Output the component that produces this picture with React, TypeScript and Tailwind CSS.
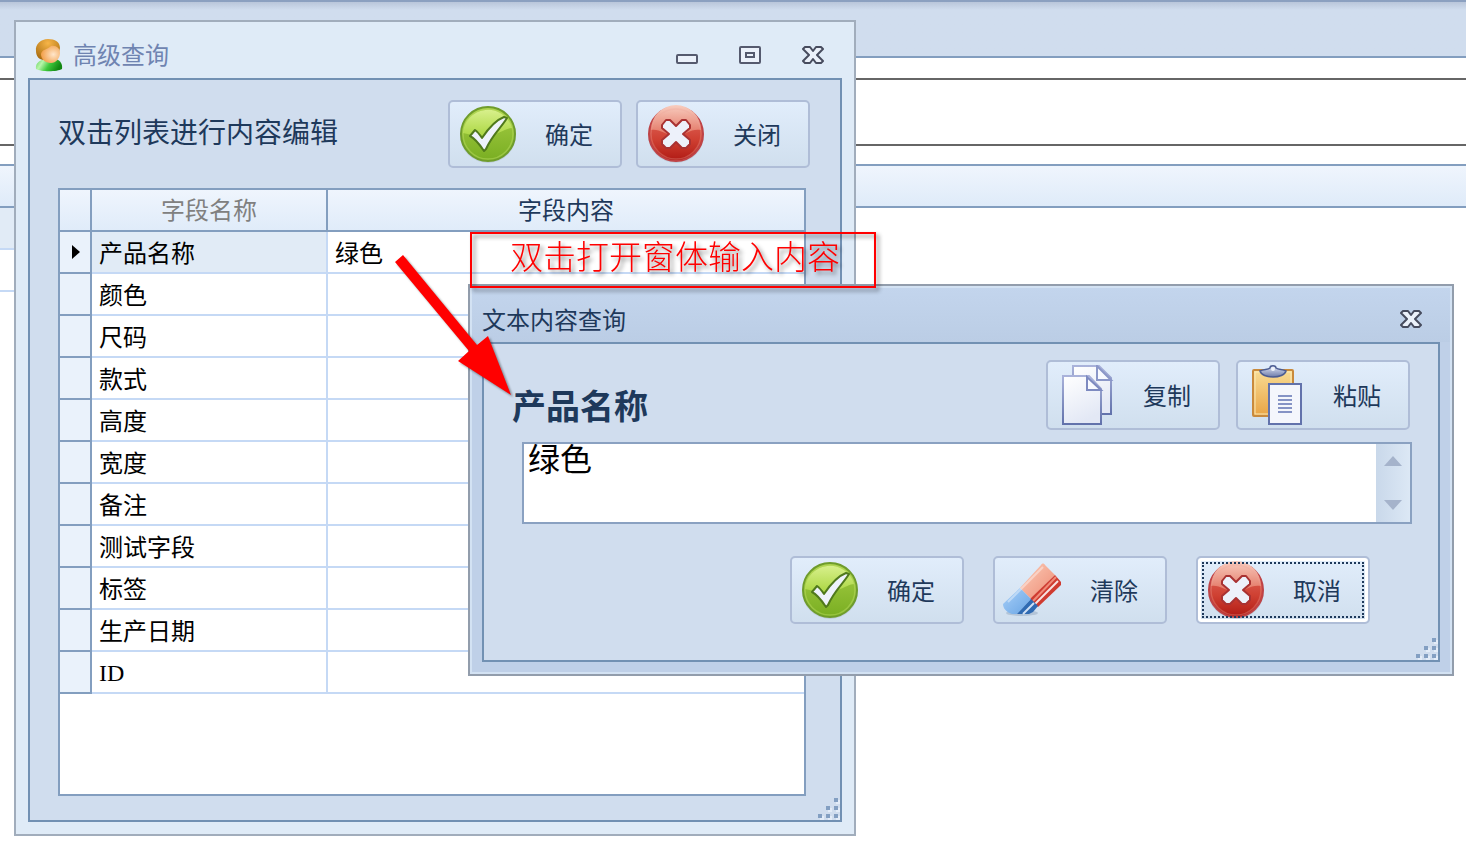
import React, { useState, type ReactNode } from "react";

/** Grid rows */
type Field = { name: string; value: string };

const initialFields: Field[] = [
  { name: "产品名称", value: "绿色" },
  { name: "颜色", value: "" },
  { name: "尺码", value: "" },
  { name: "款式", value: "" },
  { name: "高度", value: "" },
  { name: "宽度", value: "" },
  { name: "备注", value: "" },
  { name: "测试字段", value: "" },
  { name: "标签", value: "" },
  { name: "生产日期", value: "" },
  { name: "ID", value: "" },
];

function UserIcon() {
  return (
    <svg width="28" height="34" viewBox="0 0 28 34" aria-hidden="true">
      <defs>
        <radialGradient id="hair" cx="0.5" cy="0.2" r="0.8">
          <stop offset="0" stopColor="#f7b548" />
          <stop offset="1" stopColor="#a86c10" />
        </radialGradient>
        <radialGradient id="face" cx="0.65" cy="0.5" r="0.6">
          <stop offset="0" stopColor="#ffe6cb" />
          <stop offset="1" stopColor="#f3a350" />
        </radialGradient>
        <linearGradient id="shirt" x1="0" y1="0" x2="1" y2="0.3">
          <stop offset="0" stopColor="#5ccf56" />
          <stop offset="0.3" stopColor="#b8f5ab" />
          <stop offset="0.6" stopColor="#3fc93d" />
          <stop offset="1" stopColor="#128712" />
        </linearGradient>
      </defs>
      <path d="M1 31C0 25 5 22 10 21H19C24 21 28 25 27 31C22 34 6 34 1 31Z" fill="url(#shirt)" />
      <path d="M1 13C0 6 6 1 13 1C20 1 25 4 25 10L24 14L9 22C4 22 1 18 1 13Z" fill="url(#hair)" />
      <path d="M6 16C7 11 12 12 16 8C21 7 25 10 25 15C25 20 21 25 16 25C10 25 6 21 6 16Z" fill="url(#face)" />
    </svg>
  );
}

function CheckIcon() {
  return (
    <svg width="60" height="60" viewBox="0 0 60 60" aria-hidden="true">
      <defs>
        <linearGradient id="green" x1="0" y1="0" x2="0" y2="1">
          <stop offset="0" stopColor="#a6cd45" />
          <stop offset="1" stopColor="#79ae22" />
        </linearGradient>
        <linearGradient id="greenShine" x1="0" y1="0" x2="0" y2="1">
          <stop offset="0" stopColor="#d8f08c" />
          <stop offset="1" stopColor="#acd744" />
        </linearGradient>
      </defs>
      <circle cx="30" cy="31" r="28" fill="#a9b9c9" opacity="0.5" />
      <circle cx="30" cy="30" r="27" fill="url(#green)" stroke="#6f9c2c" strokeWidth="2" />
      <path d="M5 29A25 25 0 0 1 54 24C43 25 38 37 5 29Z" fill="url(#greenShine)" />
      <circle cx="30" cy="30" r="25" fill="none" stroke="#c4e36c" strokeWidth="1.500" opacity="0.4" />
      <path
        d="M12 32L17 26C20 28 22 31 24 34C30 25 38 16 46 13L49 14C43 24 34 31 28 45L26 47C22 41 18 35 12 32Z"
        fill="#eef2fb"
        stroke="#50791c"
        strokeWidth="2"
        strokeLinejoin="round"
      />
    </svg>
  );
}

function CrossIcon() {
  return (
    <svg width="60" height="60" viewBox="0 0 60 60" aria-hidden="true">
      <defs>
        <linearGradient id="red" x1="0" y1="0" x2="0" y2="1">
          <stop offset="0" stopColor="#e37368" />
          <stop offset="0.6" stopColor="#cf4032" />
          <stop offset="1" stopColor="#b01a14" />
        </linearGradient>
        <linearGradient id="redShine" x1="0" y1="0" x2="0" y2="1">
          <stop offset="0" stopColor="#f8cdbf" />
          <stop offset="1" stopColor="#e2715f" />
        </linearGradient>
      </defs>
      <circle cx="30" cy="31" r="28" fill="#a9b9c9" opacity="0.5" />
      <circle cx="30" cy="30" r="27" fill="url(#red)" stroke="#bf4346" strokeWidth="2" />
      <path d="M5 26A25 25 0 0 1 55 26C45 24 40 31 30 32C20 31 12 24 5 26Z" fill="url(#redShine)" />
      <circle cx="30" cy="30" r="25" fill="none" stroke="#f0a79b" strokeWidth="1.500" opacity="0.3" />
      <path
        d="M16 21L20 16H24L30 22L36 16H40L44 21V24L37 30L44 36V40L40 44H36L30 38L24 44H20L16 40V36L23 30L16 24Z"
        fill="#edf1fa"
        stroke="#a93232"
        strokeWidth="2"
        strokeLinejoin="round"
      />
    </svg>
  );
}

function CopyIcon() {
  return (
    <svg width="60" height="60" viewBox="0 0 60 60" aria-hidden="true">
      <defs>
        <linearGradient id="page" x1="0" y1="0" x2="0.4" y2="1">
          <stop offset="0" stopColor="#ffffff" />
          <stop offset="1" stopColor="#e3e8f5" />
        </linearGradient>
        <linearGradient id="pageEdge" x1="0" y1="0" x2="0" y2="1">
          <stop offset="0" stopColor="#a9b2da" />
          <stop offset="1" stopColor="#6272ab" />
        </linearGradient>
      </defs>
      <path d="M17 1H43L55 13V49H17Z" fill="url(#page)" stroke="url(#pageEdge)" strokeWidth="2" />
      <path d="M41 1V15H55Z" fill="#f8faff" stroke="#8b97c8" strokeWidth="2" />
      <path d="M7 11H33L45 24V59H7Z" fill="url(#page)" stroke="url(#pageEdge)" strokeWidth="2" />
      <path d="M31 12V25H45Z" fill="#f8faff" stroke="#7d8ac0" strokeWidth="2" />
    </svg>
  );
}

function PasteIcon() {
  return (
    <svg width="60" height="60" viewBox="0 0 60 60" aria-hidden="true">
      <defs>
        <linearGradient id="board" x1="0" y1="0" x2="0" y2="1">
          <stop offset="0" stopColor="#f8dc94" />
          <stop offset="1" stopColor="#e9a445" />
        </linearGradient>
        <linearGradient id="clip" x1="0" y1="0" x2="0" y2="1">
          <stop offset="0" stopColor="#e2e8f7" />
          <stop offset="1" stopColor="#6d7ba9" />
        </linearGradient>
      </defs>
      <rect x="7" y="5" width="40" height="46" rx="1" fill="url(#board)" stroke="#c98a3c" strokeWidth="2" />
      <rect x="9" y="7" width="36" height="42" fill="none" stroke="#fbe9b5" strokeWidth="1" />
      <path d="M14 6C18 4 22 5 24 3C24 0 30 0 30 3C33 5 36 4 40 6C38 14 16 14 14 6Z" fill="url(#clip)" stroke="#4c5d93" strokeWidth="1.500" />
      <circle cx="27" cy="4" r="2" fill="#eef2fb" />
      <rect x="23" y="19" width="32" height="40" fill="#f4f6fc" stroke="#6272ab" strokeWidth="2" />
      <path d="M32 31H46M32 35H46M32 39H46M32 43H46M32 47H46" stroke="#8593c5" strokeWidth="2" />
    </svg>
  );
}

function EraserIcon() {
  return (
    <svg width="60" height="60" viewBox="0 0 60 60" aria-hidden="true">
      <defs>
        <linearGradient id="pink" x1="0" y1="0" x2="1" y2="1">
          <stop offset="0" stopColor="#fbcdb9" />
          <stop offset="1" stopColor="#ee8c75" />
        </linearGradient>
        <linearGradient id="blue" x1="0" y1="0" x2="1" y2="1">
          <stop offset="0" stopColor="#a9d0f8" />
          <stop offset="1" stopColor="#68a4e4" />
        </linearGradient>
      </defs>
      <ellipse cx="19" cy="53" rx="16" ry="3" fill="#9fb0c6" opacity="0.6" />
      <path d="M38 5C39 3 41 3 42 5L52 15L28 39L17 28Z" fill="url(#pink)" />
      <path d="M52 15L58 22V25L35 47L27 39Z" fill="#cf3b30" />
      <path d="M53 17L30 41" stroke="#f08b78" strokeWidth="2" />
      <path d="M55 21L32 44" stroke="#f7e3e2" strokeWidth="2" />
      <path d="M17 28L28 39L14 54H9C3 52 0 48 0 44Z" fill="url(#blue)" />
      <path d="M28 39L35 46L30 52L26 54H14Z" fill="#2f6ab2" />
      <path d="M31 43L20 54" stroke="#cfe0f5" strokeWidth="2" />
      <path d="M40 7L5 42" stroke="#ffffff" strokeWidth="2" opacity="0.4" />
    </svg>
  );
}

function CloseGlyph() {
  return (
    <svg width="22" height="18" viewBox="0 0 22 18" aria-hidden="true">
      <path
        d="M3 1H8L11 5L14 1H19L21 3L15 9L21 15L19 17H14L11 13L8 17H3L1 15L7 9L1 3Z"
        fill="#ebf1fa"
        stroke="#474c5e"
        strokeWidth="2"
        strokeLinejoin="round"
      />
    </svg>
  );
}

function MinimizeGlyph() {
  return (
    <svg width="22" height="18" viewBox="0 0 22 18" aria-hidden="true">
      <rect x="1" y="9" width="20" height="8" rx="1" fill="#ebf1fa" stroke="#555a6e" strokeWidth="2" />
    </svg>
  );
}

function RestoreGlyph() {
  return (
    <svg width="22" height="18" viewBox="0 0 22 18" aria-hidden="true">
      <rect x="1" y="1" width="20" height="16" rx="1" fill="#ebf1fa" stroke="#555a6e" strokeWidth="2" />
      <rect x="7" y="7" width="8" height="4" fill="#ebf1fa" stroke="#555a6e" strokeWidth="2" />
    </svg>
  );
}

/** Dotted corner used to resize a window */
function ResizeGrip() {
  const dots = [
    [16, 0],
    [8, 8],
    [16, 8],
    [0, 16],
    [8, 16],
    [16, 16],
  ];
  return (
    <svg className="absolute right-0 bottom-0" width="22" height="22" viewBox="0 0 22 22" aria-hidden="true">
      {dots.map(([x, y]) => (
        <g key={`${x}-${y}`}>
          <rect x={x + 2} y={y + 2} width="4" height="4" fill="#e3ecf8" />
          <rect x={x} y={y} width="4" height="4" fill="#839fc2" />
        </g>
      ))}
    </svg>
  );
}

type ToolButtonProps = {
  icon: ReactNode;
  label: string;
  focused?: boolean;
  tall?: boolean;
  onClick?: () => void;
};

function ToolButton({ icon, label, focused, tall, onClick }: ToolButtonProps) {
  return (
    <button
      type="button"
      onClick={onClick}
      className={`flex w-[174px] items-center justify-between rounded-[5px] border-2 border-[#afbdd7] bg-linear-to-b from-[#e1edfb] to-[#d0dfee] pr-[27px] pl-2 text-2xl ${
        tall ? "h-[70px]" : "h-[68px]"
      } ${
        focused
          ? "shadow-[inset_0_0_0_3px_#ffffff] outline-2 outline-offset-[-8px] outline-[#1e395b] outline-dotted"
          : ""
      }`}
    >
      {icon}
      <span className="pt-1">{label}</span>
    </button>
  );
}

type QueryWindowProps = { fields: Field[] };

function QueryWindow({ fields }: QueryWindowProps) {
  return (
    <section className="absolute top-5 left-3.5 w-[842px] border-2 border-[#a1adbc] bg-[#dfebf7] px-3 pb-3">
      <header className="flex h-14 items-center gap-2.5 pt-2.5 pr-[18px] pl-[7px]">
        <UserIcon />
        <h1 className="flex-1 pt-0.5 text-2xl text-[#6f84b1]">高级查询</h1>
        <div className="flex gap-[41px]">
          <button type="button" aria-label="最小化">
            <MinimizeGlyph />
          </button>
          <button type="button" aria-label="还原">
            <RestoreGlyph />
          </button>
          <button type="button" aria-label="关闭窗口">
            <CloseGlyph />
          </button>
        </div>
      </header>

      <div className="relative border-2 border-[#7291b3] bg-[#d0ddee] pt-5 pb-6 pl-7">
        <div className="flex items-center gap-3.5 pr-[30px]">
          <p className="flex-1 text-[28px]">双击列表进行内容编辑</p>
          <ToolButton icon={<CheckIcon />} label="确定" />
          <ToolButton icon={<CrossIcon />} label="关闭" />
        </div>

        <div className="mt-5 mr-[34px] border-2 border-[#839ebf] bg-white pb-[100px]">
          <table className="w-full table-fixed border-separate border-spacing-0 text-2xl leading-9">
            <colgroup>
              <col className="w-8" />
              <col className="w-[236px]" />
              <col />
            </colgroup>
            <thead>
              <tr className="h-[42px] bg-linear-to-b from-[#eff5fd] to-[#dfebf9]">
                <th className="border-r-2 border-b-2 border-[#839ebf] p-0" />
                <th className="border-r-2 border-b-2 border-[#839ebf] px-0 pt-0.5 pb-0 font-normal text-[#808080]">
                  字段名称
                </th>
                <th className="border-b-2 border-[#839ebf] px-0 pt-0.5 pb-0 font-normal">字段内容</th>
              </tr>
            </thead>
            <tbody className="text-black">
              {fields.map((field, idx) => (
                <tr key={field.name} className="h-[42px]">
                  <td className="border-r-2 border-b-2 border-[#839ebf] bg-[#eaf2fb] p-0">
                    {idx === 0 && (
                      <svg className="ml-3" width="8" height="14" viewBox="0 0 8 14" aria-hidden="true">
                        <path d="M0 0L8 7L0 14Z" fill="#000000" />
                      </svg>
                    )}
                  </td>
                  <td
                    className={`border-r-2 border-b-2 border-[#c5d9f5] pr-0 pb-0 pl-[7px] ${
                      idx === 0 ? "bg-[#e1ebf6]" : ""
                    } ${field.name === "ID" ? "pt-0.5 font-['Liberation_Serif',serif]" : "pt-1"}`}
                  >
                    {field.name}
                  </td>
                  <td className="border-b-2 border-[#c5d9f5] pt-1 pr-0 pb-0 pl-[7px]">{field.value}</td>
                </tr>
              ))}
            </tbody>
          </table>
        </div>
        <ResizeGrip />
      </div>
    </section>
  );
}

type TextWindowProps = {
  title: string;
  value: string;
  onChange: (value: string) => void;
};

function TextWindow({ title, value, onChange }: TextWindowProps) {
  return (
    <section className="absolute top-[284px] left-[468px] w-[986px] border-2 border-[#929dac] bg-[#bfd0e8]">
      <div className="border-2 border-[#d3e2f3] px-2.5 pb-2.5">
        <header className="-mx-2.5 flex h-[54px] items-center justify-between bg-linear-to-b from-[#c3d5ed] to-[#bbcde5] pt-2 pr-7 pl-2.5">
          <h2 className="pt-1 text-2xl">文本内容查询</h2>
          <button type="button" aria-label="关闭窗口">
            <CloseGlyph />
          </button>
        </header>

        <div className="relative border-2 border-[#7291b3] bg-[#d0ddee] pt-4 pb-9">
          <div className="flex items-center gap-4 pr-7 pl-7">
            <label htmlFor="content" className="flex-1 pt-6 text-[34px] leading-10 font-bold">
              {title}
            </label>
            <ToolButton tall icon={<CopyIcon />} label="复制" />
            <ToolButton tall icon={<PasteIcon />} label="粘贴" />
          </div>

          <div className="mt-3 mr-[26px] ml-[38px] flex h-[82px] border-2 border-[#8aa1c1] bg-white">
            <textarea
              id="content"
              value={value}
              onChange={(e) => onChange(e.target.value)}
              className="flex-1 resize-none overflow-hidden pl-1 text-[32px] leading-8 text-black outline-none"
            />
            <div className="flex w-[34px] flex-col items-center justify-between bg-linear-to-r from-[#c9d8ea] to-[#dce8f5] py-3">
              <button type="button" aria-label="向上滚动">
                <svg width="18" height="10" viewBox="0 0 18 10" aria-hidden="true">
                  <path d="M9 0L18 10H0Z" fill="#a5b3cb" />
                </svg>
              </button>
              <button type="button" aria-label="向下滚动">
                <svg width="18" height="10" viewBox="0 0 18 10" aria-hidden="true">
                  <path d="M0 0H18L9 10Z" fill="#a5b3cb" />
                </svg>
              </button>
            </div>
          </div>

          <div className="mt-8 flex justify-end gap-[29px] pr-[68px]">
            <ToolButton icon={<CheckIcon />} label="确定" />
            <ToolButton icon={<EraserIcon />} label="清除" onClick={() => onChange("")} />
            <ToolButton focused icon={<CrossIcon />} label="取消" />
          </div>
          <ResizeGrip />
        </div>
      </div>
    </section>
  );
}

/** Main form that lies behind both windows */
function Backdrop() {
  return (
    <div>
      <div className="h-[58px] border-t-2 border-b-2 border-t-[#8ba0c0] border-b-[#839ebf] bg-linear-to-b from-[#b9c6da] to-[#d0ddee] to-[8px]" />
      <div className="mt-5 h-[68px] border-y-2 border-[#666666]" />
      <div className="mt-[18px] h-11 border-y-2 border-[#839ebf] bg-linear-to-b from-[#eff5fd] to-[#dfebf9]" />
      <div className="h-[42px] w-10 border-b-2 border-[#c5d9f5] bg-[#e1ebf6]" />
      <div className="h-[42px] w-10 border-b-2 border-[#c5d9f5]" />
    </div>
  );
}

/** Red hint box and arrow drawn above the windows */
function Hint() {
  return (
    <div className="pointer-events-none">
      <div className="absolute top-[232px] left-[470px] flex h-[56px] w-[406px] items-center border-2 border-[#ff0000] pb-1 pl-[38px] text-[33px] font-light whitespace-nowrap text-[#ff0000] drop-shadow-[3px_3px_2px_rgba(0,0,0,0.45)]">
        双击打开窗体输入内容
      </div>
      <svg
        className="absolute top-[250px] left-[390px] drop-shadow-[2px_2px_1px_rgba(0,0,0,0.4)]"
        width="126"
        height="150"
        viewBox="390 250 126 150"
        aria-hidden="true"
      >
        <path d="M395 262L403 255L477 345L488 336L511 395L458 361L469 351Z" fill="#ff0000" />
      </svg>
    </div>
  );
}

export default function App() {
  const [content, setContent] = useState<string>("绿色");
  const [fields] = useState<Field[]>(initialFields);

  return (
    <main className="relative min-h-screen overflow-hidden bg-white font-['Liberation_Sans','Noto_Sans_CJK_SC',sans-serif] text-[#1e395b]">
      <Backdrop />
      <QueryWindow fields={fields} />
      <TextWindow title={fields[0].name} value={content} onChange={setContent} />
      <Hint />
    </main>
  );
}
